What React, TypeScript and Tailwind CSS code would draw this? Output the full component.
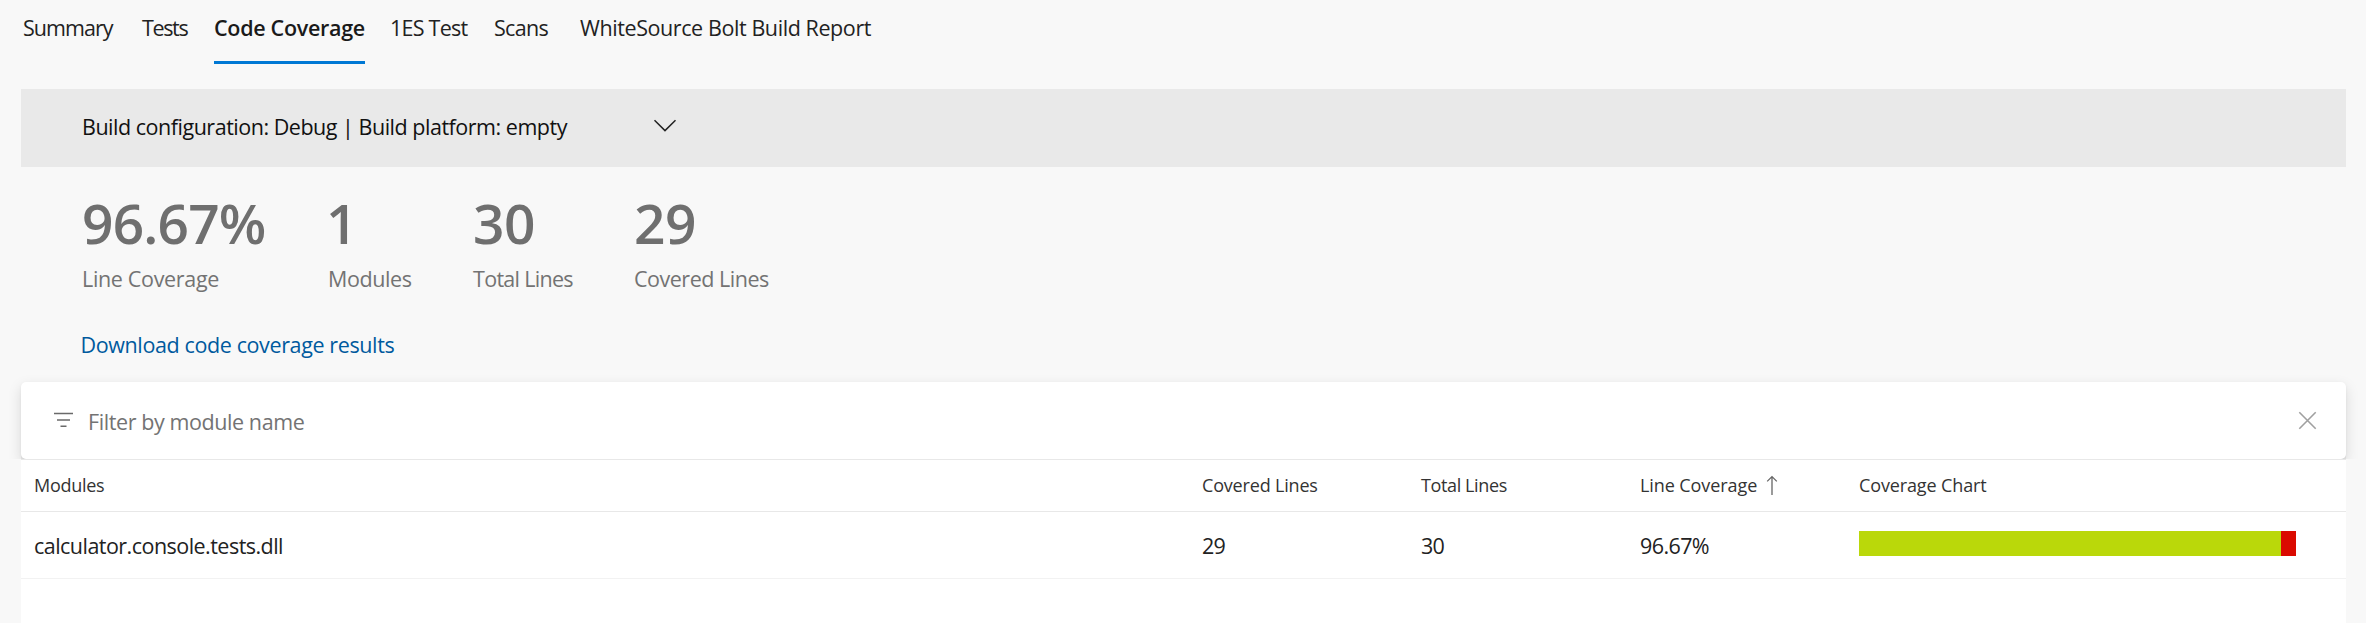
import React from "react";

const tabs = [
  { name: "Summary", style: "w-[119px] tracking-[-0.95px]" },
  { name: "Tests", style: "w-[72px] tracking-[-1.35px]" },
  { name: "Code Coverage", style: "w-[151px] mr-[25px] tracking-[-0.3px] font-semibold border-[#0078d4]", active: true },
  { name: "1ES Test", style: "w-[104px] tracking-[-0.75px]" },
  { name: "Scans", style: "w-[86px] tracking-[-0.7px]" },
  { name: "WhiteSource Bolt Build Report", style: "tracking-[-0.41px]" },
];

const stats = [
  { value: "96.67%", label: "Line Coverage", box: "w-[246px]", v: "tracking-[-0.8px]", l: "tracking-[-0.33px]" },
  { value: "1", label: "Modules", box: "w-[145px]", v: "-ml-[2px]", l: "tracking-[-0.4px]" },
  { value: "30", label: "Total Lines", box: "w-[161px]", v: "tracking-[-0.4px]", l: "tracking-[-0.7px]" },
  { value: "29", label: "Covered Lines", box: "w-[160px]", v: "tracking-[-0.4px]", l: "tracking-[-0.48px]" },
];

const columns = "grid grid-cols-[1168px_219px_219px_219px_1fr] pl-[13px]";

export default function App() {
  return (
    <div className="flex h-[623px] w-[2366px] flex-col overflow-hidden bg-[#f8f8f8] font-['Open_Sans',sans-serif] text-[21.5px] leading-[30px] whitespace-nowrap text-[#222]">
      <nav className="flex h-16 pl-[23px] pr-5">
        {tabs.map((t) => (
          <a
            key={t.name}
            className={`${t.style} h-16 pt-[13px] ${t.active ? "border-b-[3px] text-[#1a1a1a]" : ""}`}
          >
            {t.name}
          </a>
        ))}
      </nav>

      <div className="mt-[25px] ml-[21px] flex h-[78px] w-[2325px] pt-[23px] pl-[61px] bg-[#e9e9e9] text-[#111]">
        <span className="w-[571px] tracking-[-0.48px]">
          Build configuration: Debug | Build platform: empty
        </span>
        <svg className="mt-[7px] h-[13px] w-6" viewBox="0 0 24 13" fill="none" stroke="#222" strokeWidth="1.5">
          <path d="M1.5 1.3 L12 11.6 L22.5 1.3" />
        </svg>
      </div>

      <div className="mt-[18px] flex pl-[82px] text-[#737373]">
        {stats.map((s) => (
          <div key={s.label} className={s.box}>
            <div className={`text-[55px] leading-[76px] font-semibold text-[#6f6f6f] ${s.v}`}>{s.value}</div>
            <div className={`mt-[3px] ${s.l}`}>{s.label}</div>
          </div>
        ))}
      </div>

      <a className="mt-9 pl-[80.5px] text-[#005a9e] tracking-[-0.38px]">Download code coverage results</a>

      <main className="mt-[22px] ml-[21px] flex w-[2325px] grow flex-col">
        <div className="bg-linear-to-b from-transparent from-50% to-[#ececec] to-50%">
          <div className="flex h-[77px] rounded-[5px] bg-white pl-8 pr-[29px] shadow-[0_5px_14px_rgba(0,0,0,0.13),0_1px_3px_rgba(0,0,0,0.05)] [clip-path:inset(-20px_-20px_0_-20px)]">
            <svg className="mt-[29px] h-5 w-[22px]" viewBox="0 0 22 20" fill="none" stroke="#6a6a6a" strokeWidth="1.4">
              <path d="M1 2.5 H20 M4 9 H17 M7.5 15.2 H13.5" />
            </svg>
            <span className="mt-[25px] ml-[13px] grow tracking-[-0.41px] text-[#737373]">Filter by module name</span>
            <svg className="mt-[29px] h-[19px] w-[19px]" viewBox="0 0 19 19" fill="none" stroke="#a0a0a0" strokeWidth="1.6">
              <path d="M1.3 1.3 L17.7 17.7 M17.7 1.3 L1.3 17.7" />
            </svg>
          </div>
        </div>

        <div className={`${columns} h-[53px] border-y border-[#e8e8e8] bg-white pt-3 text-[18px] leading-[26px] text-[#333]`}>
          <span className="tracking-[-0.27px]">Modules</span>
          <span className="tracking-[-0.18px]">Covered Lines</span>
          <span className="tracking-[-0.38px]">Total Lines</span>
          <span className="flex tracking-[-0.08px]">
            Line Coverage
            <svg className="mt-[3px] ml-[9px] h-[21px] w-3" viewBox="0 0 12 21" fill="none" stroke="#666" strokeWidth="1.3">
              <path d="M6 20 V1.8 M1.2 6.4 L6 1.6 L10.8 6.4" />
            </svg>
          </span>
          <span className="tracking-[-0.13px]">Coverage Chart</span>
        </div>

        <div className={`${columns} h-[67px] border-b border-[#f2f2f2] bg-white pt-[19px]`}>
          <span className="tracking-[-0.53px]">calculator.console.tests.dll</span>
          <span className="tracking-[-0.7px]">29</span>
          <span className="tracking-[-0.7px]">30</span>
          <span className="tracking-[-0.6px]">96.67%</span>
          <div className="flex h-[25px] w-[437px]">
            <div className="grow bg-[#bad80a]" />
            <div className="w-[15px] bg-[#da0a00]" />
          </div>
        </div>
        <div className="grow bg-white" />
      </main>
    </div>
  );
}
